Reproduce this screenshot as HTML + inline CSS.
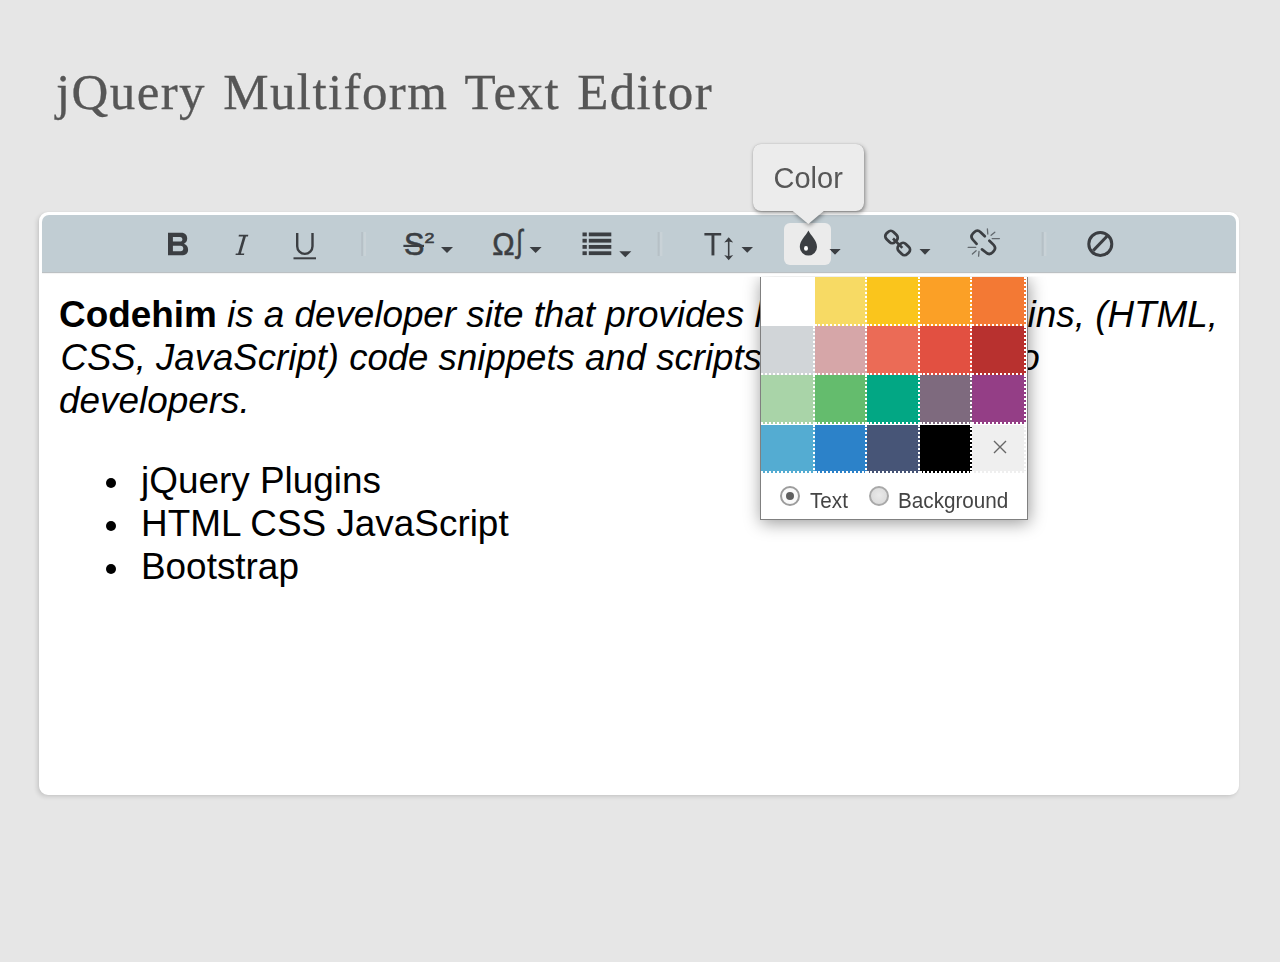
<!DOCTYPE html>
<html><head><meta charset="utf-8">
<style>
html,body{margin:0;padding:0;}
body{width:1280px;height:962px;background:#e6e6e6;position:relative;overflow:hidden;font-family:"Liberation Sans",sans-serif;}
.title{position:absolute;left:56px;top:60.5px;font-family:"Liberation Serif",serif;font-size:51px;line-height:62px;letter-spacing:1.4px;word-spacing:3px;color:#565656;white-space:nowrap;-webkit-text-stroke:0.3px #565656;}
.editor{position:absolute;left:39px;top:212px;width:1194px;height:577px;border:3px solid #fff;border-radius:9px;background:#fff;box-shadow:-2px 2px 4px rgba(0,0,0,.12), 0 0 2px rgba(0,0,0,.05);}
.toolbar{position:absolute;left:0;top:0;width:1194px;height:56.7px;background:#c1cdd3;border-radius:7px 7px 0 0;border-bottom:1.5px solid #bbc0c3;box-shadow:0 1px 1px rgba(0,0,0,.05);}
.content{position:absolute;left:0;top:58px;right:0;bottom:0;}
.txt{position:absolute;left:21px;font-size:36px;line-height:43px;color:#000;white-space:nowrap;}
.txt i{font-style:italic;}
.li{position:absolute;font-size:36.9px;line-height:43px;color:#000;white-space:nowrap;}
.bul{position:absolute;width:10px;height:10px;border-radius:50%;background:#000;}
svg{position:absolute;left:0;top:0;}

.popup{position:absolute;left:760px;top:276.5px;width:265.5px;height:242.5px;background:#fff;border:1.4px solid #808080;border-top:none;box-shadow:1px 3px 16px rgba(0,0,0,.4);clip-path:inset(0 -40px -40px -40px);}
.sw{position:absolute;border-right:2px dotted #fff;border-bottom:2px dotted #fff;}
.x{position:absolute;left:228px;top:156px;width:24px;font-size:26px;line-height:26px;color:#777;text-align:center;font-family:"Liberation Sans",sans-serif;}
.radio{position:absolute;width:20px;height:20px;border-radius:50%;border:2px solid #a9a9a9;background:radial-gradient(circle at 50% 45%,#eaeaea,#d6d6d6);box-sizing:border-box;}
.radio.on{background:#fafafa;border-color:#9d9d9d;}
.radio i{position:absolute;left:4px;top:4px;width:8px;height:8px;border-radius:50%;background:#5f5f5f;}
.rlabel{position:absolute;top:211.8px;font-size:22px;line-height:26px;color:#444;transform:scaleX(0.94);transform-origin:0 0;white-space:nowrap;font-family:"Liberation Sans",sans-serif;}
.tipwrap{position:absolute;left:0;top:0;width:1280px;height:300px;filter:drop-shadow(1px 2.5px 2px rgba(0,0,0,.42));}
.tip{position:absolute;left:752.5px;top:143.7px;width:111px;height:67px;background:#ececec;border-radius:8px;box-shadow:0 0 1px rgba(0,0,0,.25);}
.tip span{position:absolute;left:21px;top:18.3px;font-size:29px;line-height:32px;color:#575757;}
</style></head>
<body>
<div class="title">jQuery Multiform Text Editor</div>

<div class="editor">
  <div class="toolbar"></div>
  <div class="content"></div>
</div>

<!-- content text in page coords -->
<div class="li" style="left:59px;top:293px;"><b>Codehim</b> <i style="letter-spacing:-0.05px">is a developer site that provides lots of</i></div>
<div class="li" style="left:1027.5px;top:293px;"><i>ins, (HTML,</i></div>
<div class="li" style="left:60.5px;top:336px;font-size:36.6px;"><i>CSS, JavaScript) code snippets and scripts free</i></div>
<div class="li" style="left:1009px;top:336px;"><i>to</i></div>
<div class="li" style="left:59px;top:379px;"><i>developers.</i></div>

<div class="bul" style="left:106px;top:478px;"></div>
<div class="bul" style="left:106px;top:521px;"></div>
<div class="bul" style="left:106px;top:564px;"></div>
<div class="li" style="left:141px;top:459px;">jQuery Plugins</div>
<div class="li" style="left:141px;top:502px;">HTML CSS JavaScript</div>
<div class="li" style="left:141px;top:545px;">Bootstrap</div>


<svg width="1280" height="962" viewBox="0 0 1280 962" style="position:absolute;left:0;top:0;">
 <g fill="#3b3e42" stroke="none">
  <!-- B -->
  <path fill-rule="evenodd" d="M168,232.8 H181.2 C185.3,232.8 187.2,235.4 187.2,238.6 C187.2,241 186,242.9 184,243.7 C186.6,244.5 188.1,246.9 188.1,249.7 C188.1,253.3 185.6,255.3 181.6,255.3 H168 Z M172.9,236.9 V241.6 H180 C181.6,241.6 182.4,240.6 182.4,239.25 C182.4,237.9 181.6,236.9 180,236.9 Z M172.9,245.8 V251.2 H180.6 C182.4,251.2 183.3,250 183.3,248.5 C183.3,247 182.4,245.8 180.6,245.8 Z"/>
  <!-- I italic -->
  <path d="M238.9,234.8 H248.3 L248,236.4 H245.9 L240.9,253.5 H244.3 L244,255 H235.5 L235.8,253.5 H238.1 L243.1,236.4 H238.6 Z"/>
  <!-- U underline -->
  <rect x="293.5" y="257.3" width="22.5" height="2"/>
  <!-- strike line of S -->
  <rect x="403.4" y="244.8" width="20.6" height="2.2"/>
  <!-- list -->
  <rect x="582.5" y="232.5" width="4.3" height="3.8"/><rect x="588.8" y="232.5" width="22.5" height="3.8"/>
  <rect x="582.5" y="238.8" width="4.3" height="3.8"/><rect x="588.8" y="238.8" width="22.5" height="3.8"/>
  <rect x="582.5" y="245" width="4.3" height="3.8"/><rect x="588.8" y="245" width="22.5" height="3.8"/>
  <rect x="582.5" y="251.3" width="4.3" height="3.8"/><rect x="588.8" y="251.3" width="22.5" height="3.8"/>
  <!-- T -->
  <rect x="704.4" y="233" width="16.8" height="2.5"/><rect x="711.5" y="233" width="2.9" height="22.4"/>
  <!-- carets -->
  <path d="M441,247 h12 l-6,6 z"/>
  <path d="M529.6,247 h12 l-6,6 z"/>
  <path d="M619.3,251.3 h12 l-6,6 z"/>
  <path d="M741.5,247 h11.5 l-5.75,5.8 z"/>
  <path d="M829.5,249 h11 l-5.5,5.5 z"/>
  <path d="M919.5,249 h11 l-5.5,5.8 z"/>
 </g>
 <g fill="none" stroke="#3b3e42">
  <!-- U -->
  <path d="M297.2,233 V246.2 A7.65,7.65 0 0 0 312.5,246.2 V233" stroke-width="2.4"/>
  <!-- arrow updown -->
  <path d="M728.7,238.5 V259" stroke-width="1.6"/>
  <!-- link -->
  <rect x="885.5" y="232" width="12" height="10" rx="3.8" transform="rotate(45 891.5 237)" stroke-width="2.8"/>
  <rect x="897.8" y="244" width="12" height="10" rx="3.8" transform="rotate(45 903.8 249)" stroke-width="2.8"/>
  <path d="M893,238.5 L902.3,247.8" stroke-width="2.6"/>
  <!-- unlink -->
  <path d="M984.8,236.3 L980.6,232.2 Q977.4,229.2 974.2,232.2 L973,233.4 Q970,236.6 973,239.8 L976.6,243.8" stroke-width="2.7" stroke-linecap="round"/>
  <path d="M989.4,240.7 L993.6,244.9 Q996.6,248.1 993.6,251.3 L992.4,252.5 Q989.2,255.5 986,252.5 L982,249.4" stroke-width="2.7" stroke-linecap="round"/>
  <g stroke="#62686d" stroke-width="1.3" stroke-linecap="round">
   <path d="M987.4,229 L987.8,234"/><path d="M994.8,232.2 L991.1,235.3"/><path d="M999.4,238.6 L992.2,238.6"/>
   <path d="M968.2,247.4 L975.7,247.4"/><path d="M972.4,254 L976.1,250.7"/><path d="M978.6,256.1 L979,251.5"/>
  </g>
  <!-- clear format -->
  <circle cx="1100.3" cy="244" r="11.5" stroke-width="3"/>
  <path d="M1093.2,250.6 L1107,236.2" stroke-width="3"/>
 </g>
 <g fill="#3b3e42">
  <!-- arrow heads -->
  <path d="M724.2,242.6 L728.7,237.3 L733.2,242.6 L728.7,241.4 Z"/>
  <path d="M724.2,255 L728.7,260.3 L733.2,255 L728.7,256.2 Z"/>
 </g>
 <!-- separators -->
 <g>
  <rect x="361.2" y="232" width="2" height="24" fill="#b6c0c6"/><rect x="363.6" y="232" width="2.4" height="24" fill="#c9d2d7"/>
  <rect x="657.6" y="232" width="2" height="24" fill="#b6c0c6"/><rect x="660" y="232" width="2.4" height="24" fill="#c9d2d7"/>
  <rect x="1041.6" y="232" width="2" height="24" fill="#b6c0c6"/><rect x="1044" y="232" width="2.4" height="24" fill="#c9d2d7"/>
 </g>
 <!-- text glyph icons -->
 <g font-family="Liberation Sans" fill="#3b3e42" stroke="#3b3e42" stroke-width="0.6">
  <text x="404" y="254.7" font-size="30.6">S</text>
  <text x="0" y="0" font-size="14.3" transform="translate(424.5 243) scale(1.25 1)">2</text>
  <text x="0" y="0" font-size="32.2" transform="translate(492.3 255) scale(0.93 1)">&#937;</text>
  <text x="0" y="0" font-size="31.6" transform="translate(516.2 252.1) scale(0.75 1)">&#8747;</text>
 </g>
 <!-- active droplet button -->
 <rect x="784" y="223" width="47" height="42" rx="6" fill="#ebebeb"/>
 <path d="M808.4,230.4 C811,236 817,240 817,247 A8.6,8.6 0 0 1 799.8,247 C799.8,240 805.8,236 808.4,230.4 Z" fill="#3b3e42"/>
 <ellipse cx="806" cy="248.4" rx="2" ry="2.3" fill="#fff"/>
 <path d="M829.5,249 h11 l-5.5,5.5 z" fill="#3b3e42"/>
</svg>


<div class="popup">
<div class="sw" style="left:0.0px;top:0.5px;width:51.6px;height:47.3px;background:#ffffff"></div>
<div class="sw" style="left:53.6px;top:0.5px;width:50.5px;height:47.3px;background:#f7da64"></div>
<div class="sw" style="left:106.1px;top:0.5px;width:50.5px;height:47.3px;background:#fac51c"></div>
<div class="sw" style="left:158.6px;top:0.5px;width:50.5px;height:47.3px;background:#fba026"></div>
<div class="sw" style="left:211.1px;top:0.5px;width:52.4px;height:47.3px;background:#f37934"></div>
<div class="sw" style="left:0.0px;top:49.8px;width:51.6px;height:47.0px;background:#d1d5d8"></div>
<div class="sw" style="left:53.6px;top:49.8px;width:50.5px;height:47.0px;background:#d6a6a8"></div>
<div class="sw" style="left:106.1px;top:49.8px;width:50.5px;height:47.0px;background:#eb6b56"></div>
<div class="sw" style="left:158.6px;top:49.8px;width:50.5px;height:47.0px;background:#e25041"></div>
<div class="sw" style="left:211.1px;top:49.8px;width:52.4px;height:47.0px;background:#b8312f"></div>
<div class="sw" style="left:0.0px;top:98.8px;width:51.6px;height:47.2px;background:#a9d4a8"></div>
<div class="sw" style="left:53.6px;top:98.8px;width:50.5px;height:47.2px;background:#64bc6d"></div>
<div class="sw" style="left:106.1px;top:98.8px;width:50.5px;height:47.2px;background:#02a784"></div>
<div class="sw" style="left:158.6px;top:98.8px;width:50.5px;height:47.2px;background:#7e6a7e"></div>
<div class="sw" style="left:211.1px;top:98.8px;width:52.4px;height:47.2px;background:#943e86"></div>
<div class="sw" style="left:0.0px;top:148.0px;width:51.6px;height:46.5px;background:#54acd2"></div>
<div class="sw" style="left:53.6px;top:148.0px;width:50.5px;height:46.5px;background:#2c82c9"></div>
<div class="sw" style="left:106.1px;top:148.0px;width:50.5px;height:46.5px;background:#475577"></div>
<div class="sw" style="left:158.6px;top:148.0px;width:50.5px;height:46.5px;background:#000000"></div>
<div class="sw" style="left:211.1px;top:148.0px;width:52.4px;height:46.5px;background:#efefef"></div>
<svg width="20" height="20" style="position:absolute;left:232px;top:163.3px;overflow:visible"><path d="M1,1 L13,13 M13,1 L1,13" stroke="#666" stroke-width="1.4" fill="none"/></svg>
<div class="radio on" style="left:18.6px;top:209.8px;"><i></i></div>
<div class="rlabel" style="left:49px;">Text</div>
<div class="radio" style="left:108.4px;top:209.8px;"></div>
<div class="rlabel" style="left:137px;">Background</div>
</div>
<div class="tipwrap">
<div class="tip"><span>Color</span></div>
<svg width="40" height="20" style="position:absolute;left:788px;top:208px;overflow:visible">
 <path d="M3.5,2 L20.3,16 L37,2 Z" fill="#ececec"/>
</svg>
</div>

</body></html>
